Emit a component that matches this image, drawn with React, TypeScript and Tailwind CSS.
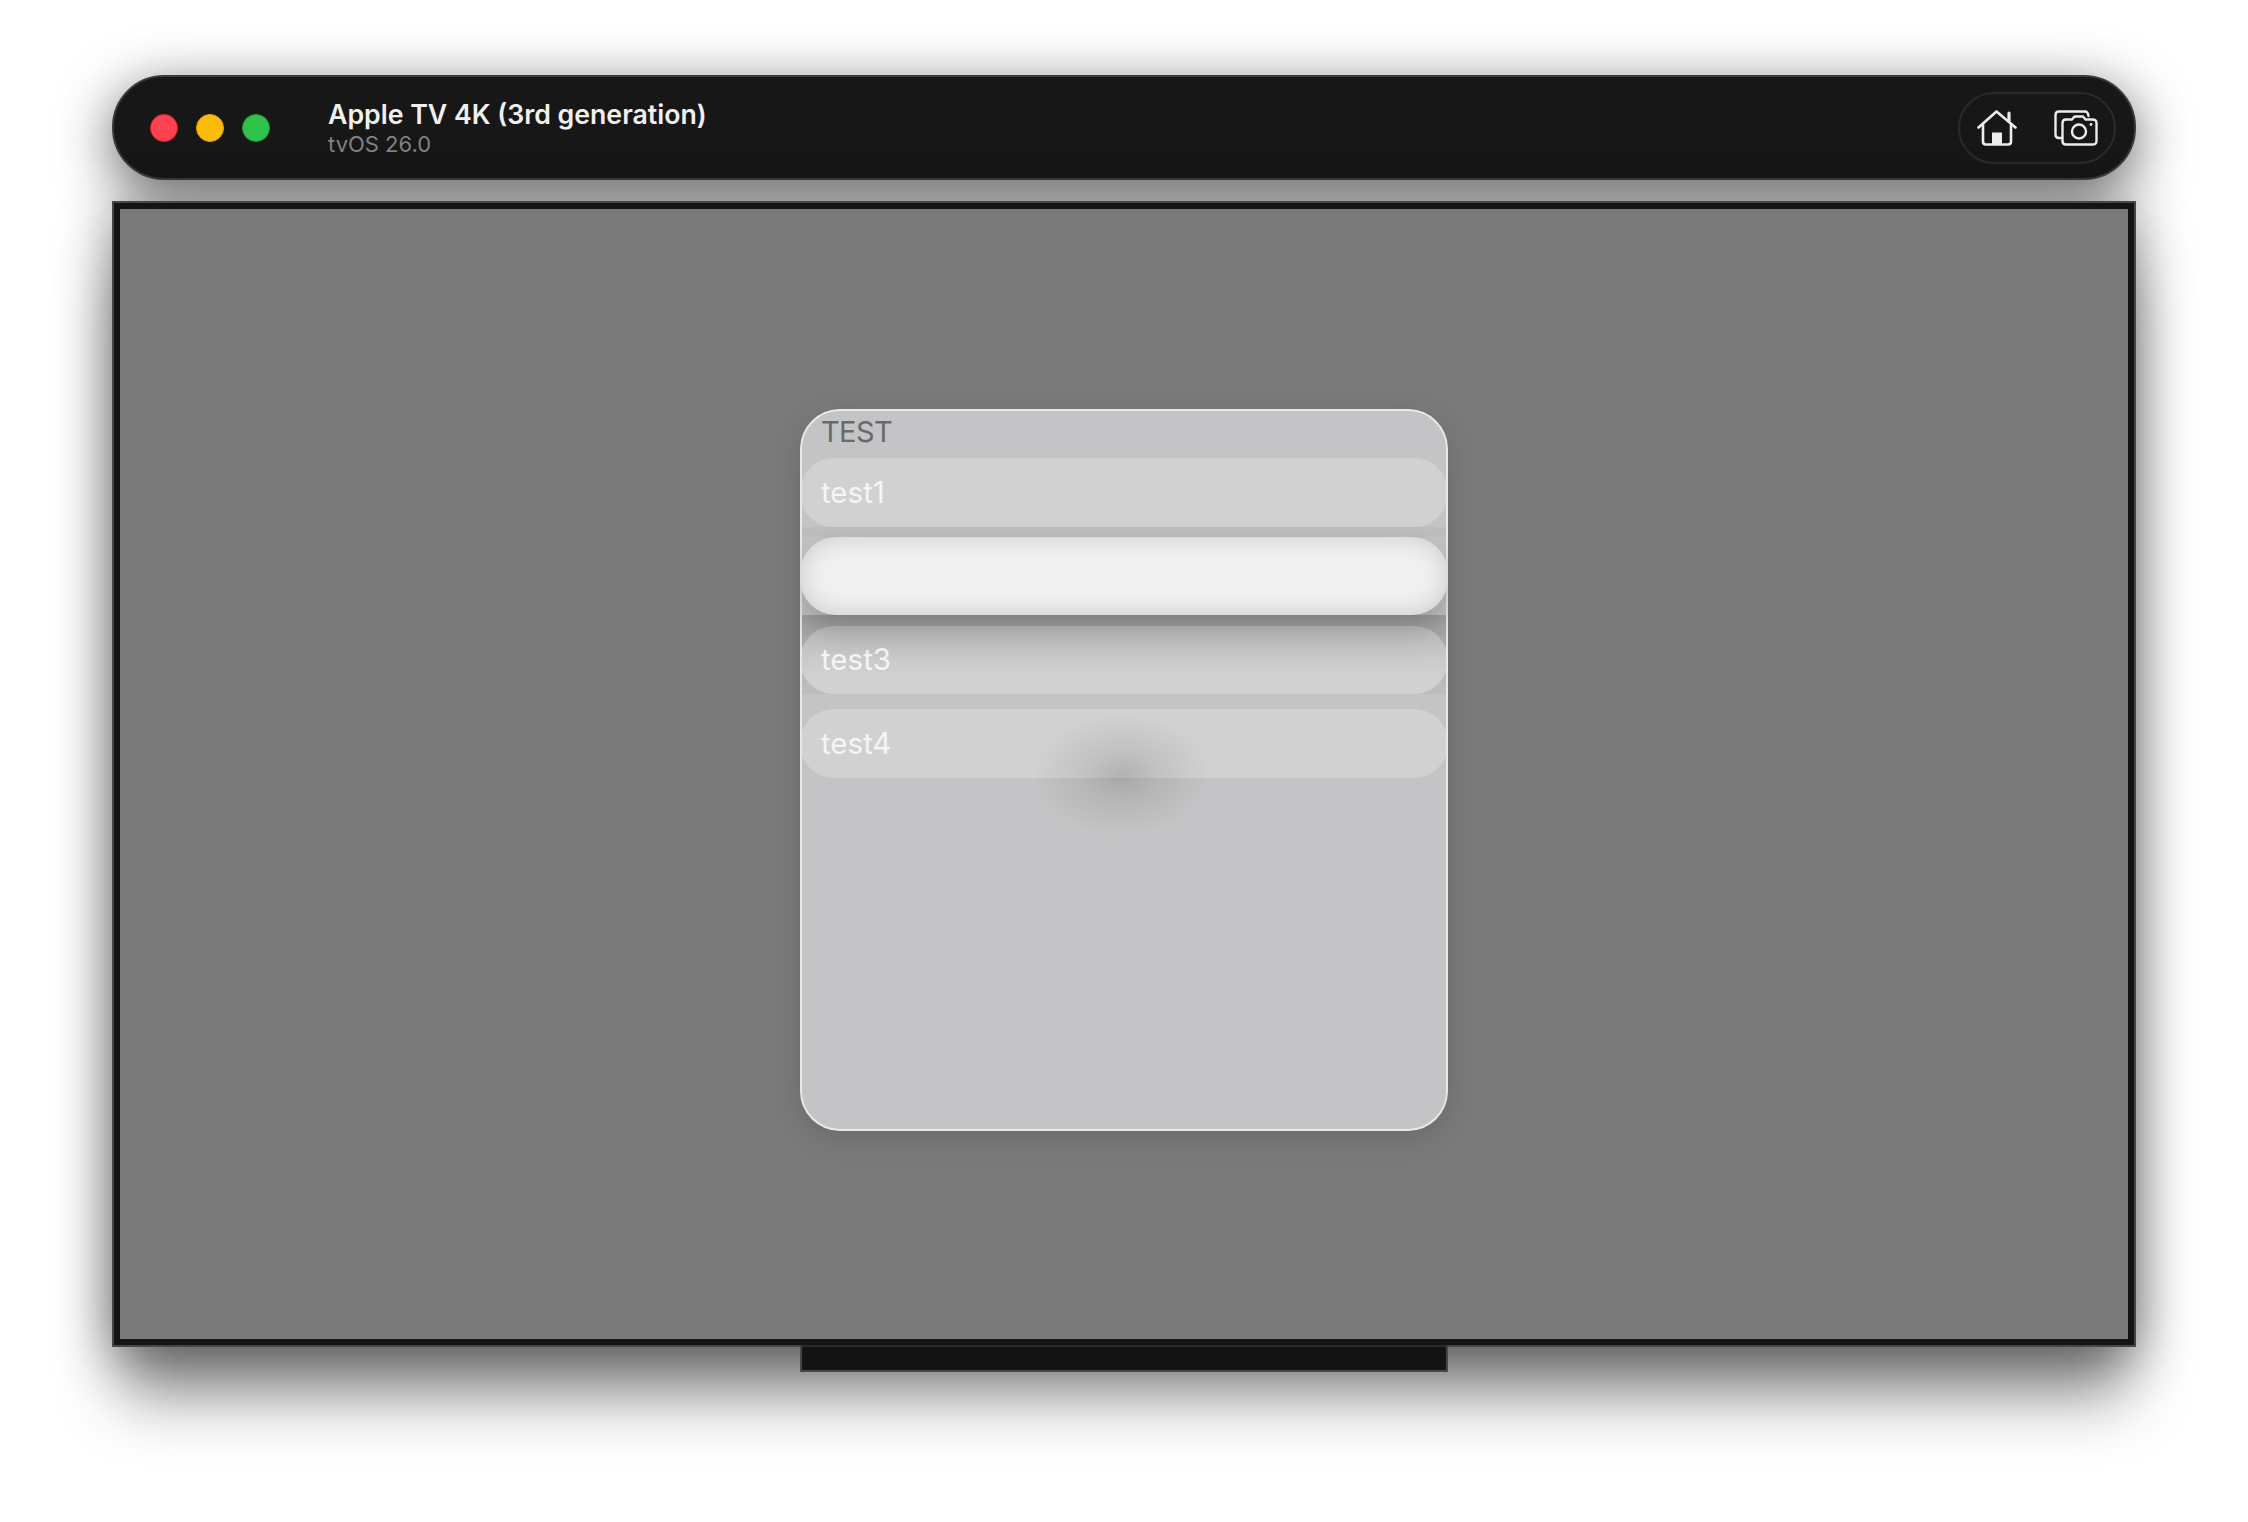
import React from 'react';

function HomeIcon() {
  return (
    <svg width="40" height="36" viewBox="0 0 40 36" fill="none" stroke="#ececec" strokeWidth="2.6" strokeLinecap="round" strokeLinejoin="round">
      <path d="M1.5 17.5 19.5 1.5 38.5 17.5" />
      <path d="M32 11.5V3" strokeWidth="3.2" />
      <path d="M6 14V31.5Q6 34.5 9 34.5H31Q34 34.5 34 31.5V14" />
      <path d="M15 34.5V22.5H25V34.5Z" fill="#ececec" stroke="none" />
    </svg>
  );
}

function CameraIcon() {
  return (
    <svg width="44" height="36" viewBox="0 0 44 36" fill="none" stroke="#ececec" strokeWidth="2.4" strokeLinecap="round" strokeLinejoin="round">
      <path d="M8 28H5Q1.5 28 1.5 24.5V5Q1.5 1.5 5 1.5H31Q34 1.5 34.5 6" />
      <path d="M12 9.5H18L20.5 6.5H29L31.5 9.5H38.5Q42.5 9.5 42.5 13V31Q42.5 34.5 38.5 34.5H12Q8.5 34.5 8.5 31V13Q8.5 9.5 12 9.5Z" fill="#171717" />
      <circle cx="25" cy="21.5" r="7" />
      <circle cx="37" cy="14.5" r="1.4" fill="#ececec" stroke="none" />
    </svg>
  );
}

export default function App() {
  return (
    <div className="min-h-[1522px] w-[2248px] bg-white pt-[75px] pl-[112px] font-['Inter','Liberation_Sans',sans-serif]">
      <div className="w-[2024px]">
        <div className="relative z-10 flex h-[105px] items-center rounded-[52px] border-2 border-[#3a3a3a] bg-[#171717] pr-[18px] pl-[36px] shadow-[0_14px_56px_rgba(0,0,0,0.62)]">
          <div className="flex gap-[18px]">
            <span className="h-[28px] w-[28px] rounded-full border border-[#e0202f] bg-[#ff4250]" />
            <span className="h-[28px] w-[28px] rounded-full border border-[#e0a000] bg-[#f9bc0b]" />
            <span className="h-[28px] w-[28px] rounded-full border border-[#1f9e32] bg-[#31c24a]" />
          </div>
          <div className="ml-[58px] flex flex-col">
            <span className="text-[26.7px] leading-[32px] font-semibold text-[#f0f0f0]">Apple TV 4K (3rd generation)</span>
            <span className="pt-[1px] text-[22px] leading-[27px] text-[#828282]">tvOS 26.0</span>
          </div>
          <div className="ml-auto flex h-[72px] w-[158px] items-center justify-center gap-[37px] rounded-[36px] border-2 border-[#2b2b2b]">
            <HomeIcon />
            <CameraIcon />
          </div>
        </div>

        <div className="relative z-20 mt-[21px] h-[1146px] border-[2px] border-[#474747] bg-[#141414] p-[6px] shadow-[0_6px_50px_rgba(0,0,0,0.45),0_60px_60px_-10px_rgba(0,0,0,0.42)]">
          <div className="flex h-full items-center justify-center bg-[#7a7a7a] pb-[9px]">
            <div className="relative flex h-[722px] w-[648px] flex-col overflow-hidden rounded-[40px] bg-[#c4c4c6] shadow-[0_8px_30px_rgba(0,0,0,0.12)]">
              <div className="h-[49px] pl-[21px] text-[29px] leading-[46px] tracking-[-0.6px] text-[#6a6a6a]">TEST</div>
              <div className="flex h-[69px] items-center rounded-[34px] bg-[#d1d1d1] pl-[21px] text-[29.5px] text-[#f5f5f5]">test1</div>
              <div className="h-[10px] bg-[#bebebe]" />
              <div className="relative z-30 h-[78px] rounded-[36px] bg-[#f0f0f0] shadow-[inset_0_0_24px_rgba(0,0,0,0.17),0_14px_30px_rgba(0,0,0,0.22)]" />
              <div className="flex h-[79px] items-end bg-[linear-gradient(180deg,#a0a0a0_0px,#bcbcbc_70px)]">
                <div className="flex h-[68px] w-full items-center rounded-[34px] bg-[linear-gradient(180deg,#bcbcbc,#d1d1d1_75%)] pl-[21px] text-[29.5px] text-[#f5f5f5]">test3</div>
              </div>
              <div className="mt-[15px] flex h-[69px] items-center rounded-[34px] bg-[#d1d1d1] pl-[21px] text-[29.5px] text-[#f5f5f5]">test4</div>
              <div className="absolute top-[304px] left-[232px] h-[124px] w-[180px] rounded-full bg-[radial-gradient(closest-side,rgba(0,0,0,0.15),rgba(0,0,0,0.07)_42%,rgba(0,0,0,0)_100%)]" />
              <div className="pointer-events-none absolute inset-0 z-20 rounded-[40px] border-[2px] border-[#e8e8e8]" />
            </div>
          </div>
        </div>

        <div className="relative z-30 mx-auto -mt-[2px] h-[27px] w-[648px] border-[2px] border-[#474747] border-t-[#2b2b2b] bg-[#141414] shadow-[0_55px_55px_-15px_rgba(0,0,0,0.5)]" />
      </div>
    </div>
  );
}
